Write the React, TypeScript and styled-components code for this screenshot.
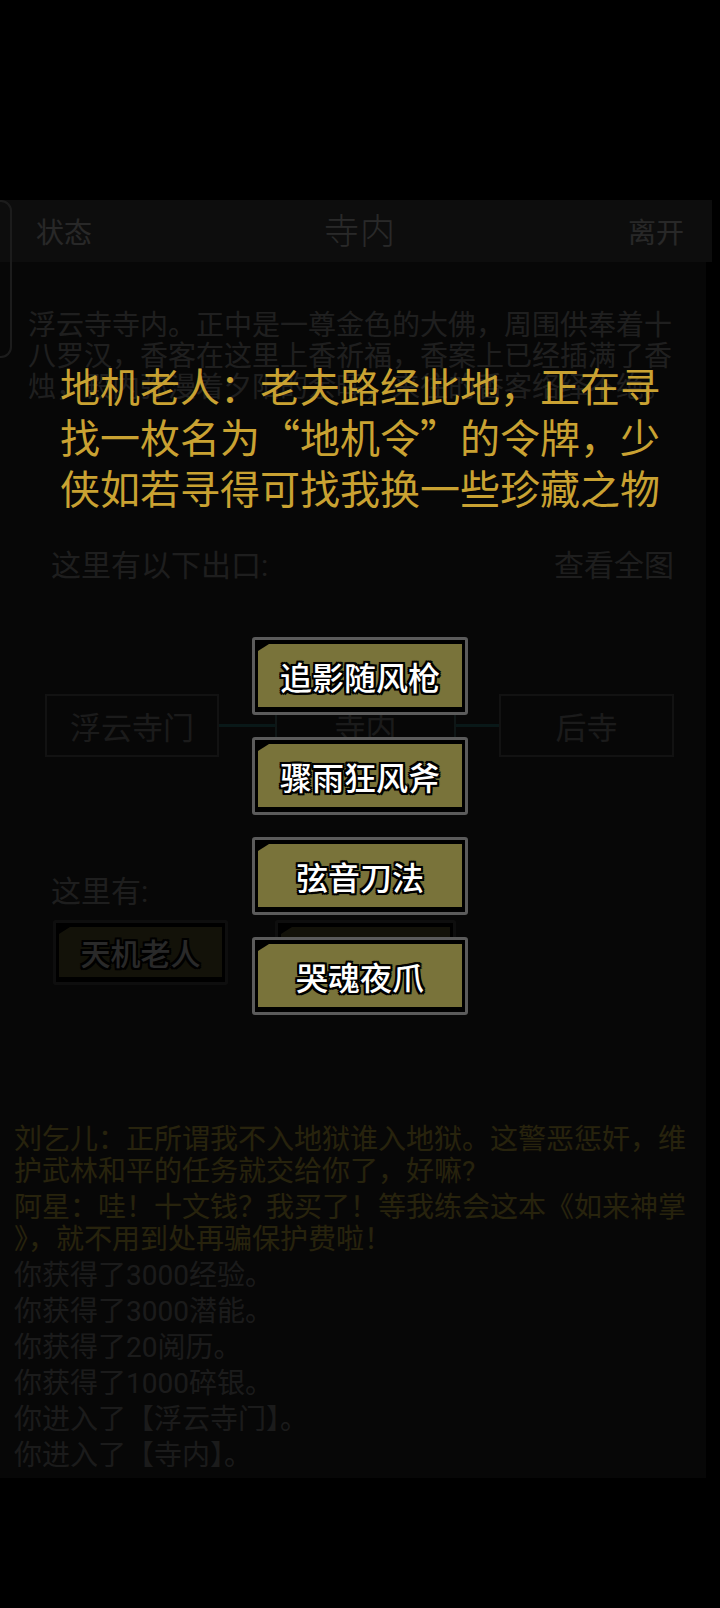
import React from "react";
import styled, { createGlobalStyle } from "styled-components";

const FONT = `Roboto, "Noto Sans CJK SC", sans-serif`;

const GlobalStyle = createGlobalStyle`
  html, body { margin: 0; padding: 0; background: #000; }
  body { font-family: ${FONT}; }
  * { box-sizing: border-box; }
`;

const Screen = styled.div`
  position: relative;
  width: 720px;
  height: 1608px;
  overflow: hidden;
  background: #000;
  padding-top: 200px;
`;

const TopBar = styled.header`
  display: grid;
  grid-template-columns: 1fr auto 1fr;
  align-items: center;
  height: 62px;
  margin-right: 8px;
  padding: 0 28px 0 36px;
  background: #505050;
  color: #f5f5f5;
  font-size: 28px;
`;

const BarAction = styled.span<{ $end?: boolean }>`
  justify-self: ${(p) => (p.$end ? "end" : "start")};
`;

const BarTitle = styled.h1`
  margin: 0 0 6px;
  font-size: 35px;
  font-weight: 300;
  letter-spacing: 1px;
  color: #ffffff;
`;

const Panel = styled.main`
  display: flex;
  flex-direction: column;
  margin-right: 14px;
  padding-bottom: 6px;
  background: #2c2c2c;
`;

const Description = styled.p`
  margin: 48px 0 0 28px;
  width: 652px;
  font-size: 28px;
  line-height: 31px;
  color: #c0c0c0;
`;

const SectionHead = styled.div<{ $gap: number }>`
  display: flex;
  justify-content: space-between;
  align-items: center;
  margin-top: ${(p) => p.$gap}px;
  padding: 0 32px 0 51px;
  font-size: 30px;
  line-height: 40px;
  color: #b8b8b8;
`;

const ExitMap = styled.div`
  display: grid;
  grid-template-columns: 174px 56px 181px 43px 175px;
  align-items: center;
  margin: 108px 0 0 45px;
`;

const ExitBox = styled.div<{ $current?: boolean }>`
  height: 63px;
  display: flex;
  align-items: center;
  justify-content: center;
  border: 2px solid ${(p) => (p.$current ? "#5e8a8a" : "#707070")};
  font-size: 31px;
  color: #a8a8a8;
`;

const Connector = styled.div`
  height: 3px;
  background: #3c9696;
`;

const NpcRow = styled.div`
  display: flex;
  gap: 47px;
  margin-top: 8px;
  padding-left: 53px;
`;

const Log = styled.section`
  display: flex;
  flex-direction: column;
  gap: 4px;
  margin-top: 139px;
  padding: 0 16px 0 14px;
  font-size: 28px;
  line-height: 32px;
  line-break: anywhere;
`;

const LogLine = styled.div<{ $tone: "speech" | "system" }>`
  color: ${(p) => (p.$tone === "speech" ? "#f0d650" : "#a8a8a8")};
`;

const DrawerTab = styled.div`
  position: absolute;
  left: -14px;
  top: 200px;
  width: 26px;
  height: 158px;
  border: 2px solid #b0b0b0;
  border-radius: 11px;
`;

const Dim = styled.div`
  position: absolute;
  inset: 0;
  background: rgba(0, 0, 0, 0.84);
`;

const Dialog = styled.div`
  position: absolute;
  inset: 0;
  display: flex;
  flex-direction: column;
  align-items: center;
  padding-top: 360px;
`;

const Speech = styled.p`
  margin: 0;
  width: 620px;
  font-family: "Noto Sans CJK SC", sans-serif;
  font-size: 40px;
  line-height: 51px;
  text-align: center;
  color: #c9a232;
`;

const Choices = styled.div`
  display: flex;
  flex-direction: column;
  gap: 22px;
  margin-top: 124px;
`;

const ChoiceFrame = styled.button<{ $w: number; $h: number }>`
  display: flex;
  width: ${(p) => p.$w}px;
  height: ${(p) => p.$h}px;
  padding: 4px 3px 5px 3px;
  border: 3px solid #5b5b5b;
  border-radius: 3px;
  background: #000;
  font: inherit;
  cursor: pointer;
`;

const ChoiceFace = styled.span<{ $size: number }>`
  flex: 1;
  display: flex;
  align-items: center;
  justify-content: center;
  background: #79733a;
  clip-path: polygon(11px 0, 100% 0, 100% 100%, 0 100%, 0 7px);
  color: #fff;
  font-size: ${(p) => p.$size}px;
  font-weight: 500;
  text-shadow: -2px -2px 0 #000, 2px -2px 0 #000, -2px 2px 0 #000,
    2px 2px 0 #000, 0 -2px 0 #000, 0 2px 0 #000, -2px 0 0 #000, 2px 0 0 #000,
    0 0 3px #000;
`;

function ChoiceButton({
  label,
  w = 216,
  h = 78,
  size = 32,
}: {
  label: string;
  w?: number;
  h?: number;
  size?: number;
}) {
  return (
    <ChoiceFrame $w={w} $h={h}>
      <ChoiceFace $size={size}>{label}</ChoiceFace>
    </ChoiceFrame>
  );
}

const logs: { tone: "speech" | "system"; text: string }[] = [
  { tone: "speech", text: "刘乞儿：正所谓我不入地狱谁入地狱。这警恶惩奸，维护武林和平的任务就交给你了，好嘛?" },
  { tone: "speech", text: "阿星：哇！十文钱？我买了！等我练会这本《如来神掌》，就不用到处再骗保护费啦！" },
  { tone: "system", text: "你获得了3000经验。" },
  { tone: "system", text: "你获得了3000潜能。" },
  { tone: "system", text: "你获得了20阅历。" },
  { tone: "system", text: "你获得了1000碎银。" },
  { tone: "system", text: "你进入了【浮云寺门】。" },
  { tone: "system", text: "你进入了【寺内】。" },
];

const choices = ["追影随风枪", "骤雨狂风斧", "弦音刀法", "哭魂夜爪"];

export default function App() {
  return (
    <>
      <GlobalStyle />
      <Screen>
        <TopBar>
          <BarAction>状态</BarAction>
          <BarTitle>寺内</BarTitle>
          <BarAction $end>离开</BarAction>
        </TopBar>
        <Panel>
          <Description>
            浮云寺寺内。正中是一尊金色的大佛，周围供奉着十八罗汉，香客在这里上香祈福，香案上已经插满了香烛，殿内弥漫着夕阳的余晖，来往的香客络绎不绝。
          </Description>
          <SectionHead $gap={143}>
            <span>这里有以下出口:</span>
            <span>查看全图</span>
          </SectionHead>
          <ExitMap>
            <ExitBox>浮云寺门</ExitBox>
            <Connector />
            <ExitBox $current>寺内</ExitBox>
            <Connector />
            <ExitBox>后寺</ExitBox>
          </ExitMap>
          <SectionHead $gap={115}>
            <span>这里有:</span>
          </SectionHead>
          <NpcRow>
            <ChoiceButton label="天机老人" w={175} h={65} size={30} />
            <ChoiceButton label="地机老人" w={181} h={65} size={30} />
          </NpcRow>
          <Log>
            {logs.map((l, i) => (
              <LogLine key={i} $tone={l.tone}>
                {l.text}
              </LogLine>
            ))}
          </Log>
        </Panel>
        <DrawerTab />
        <Dim />
        <Dialog>
          <Speech>
            地机老人：老夫路经此地，正在寻找一枚名为“地机令”的令牌，少侠如若寻得可找我换一些珍藏之物
          </Speech>
          <Choices>
            {choices.map((c) => (
              <ChoiceButton key={c} label={c} />
            ))}
          </Choices>
        </Dialog>
      </Screen>
    </>
  );
}
